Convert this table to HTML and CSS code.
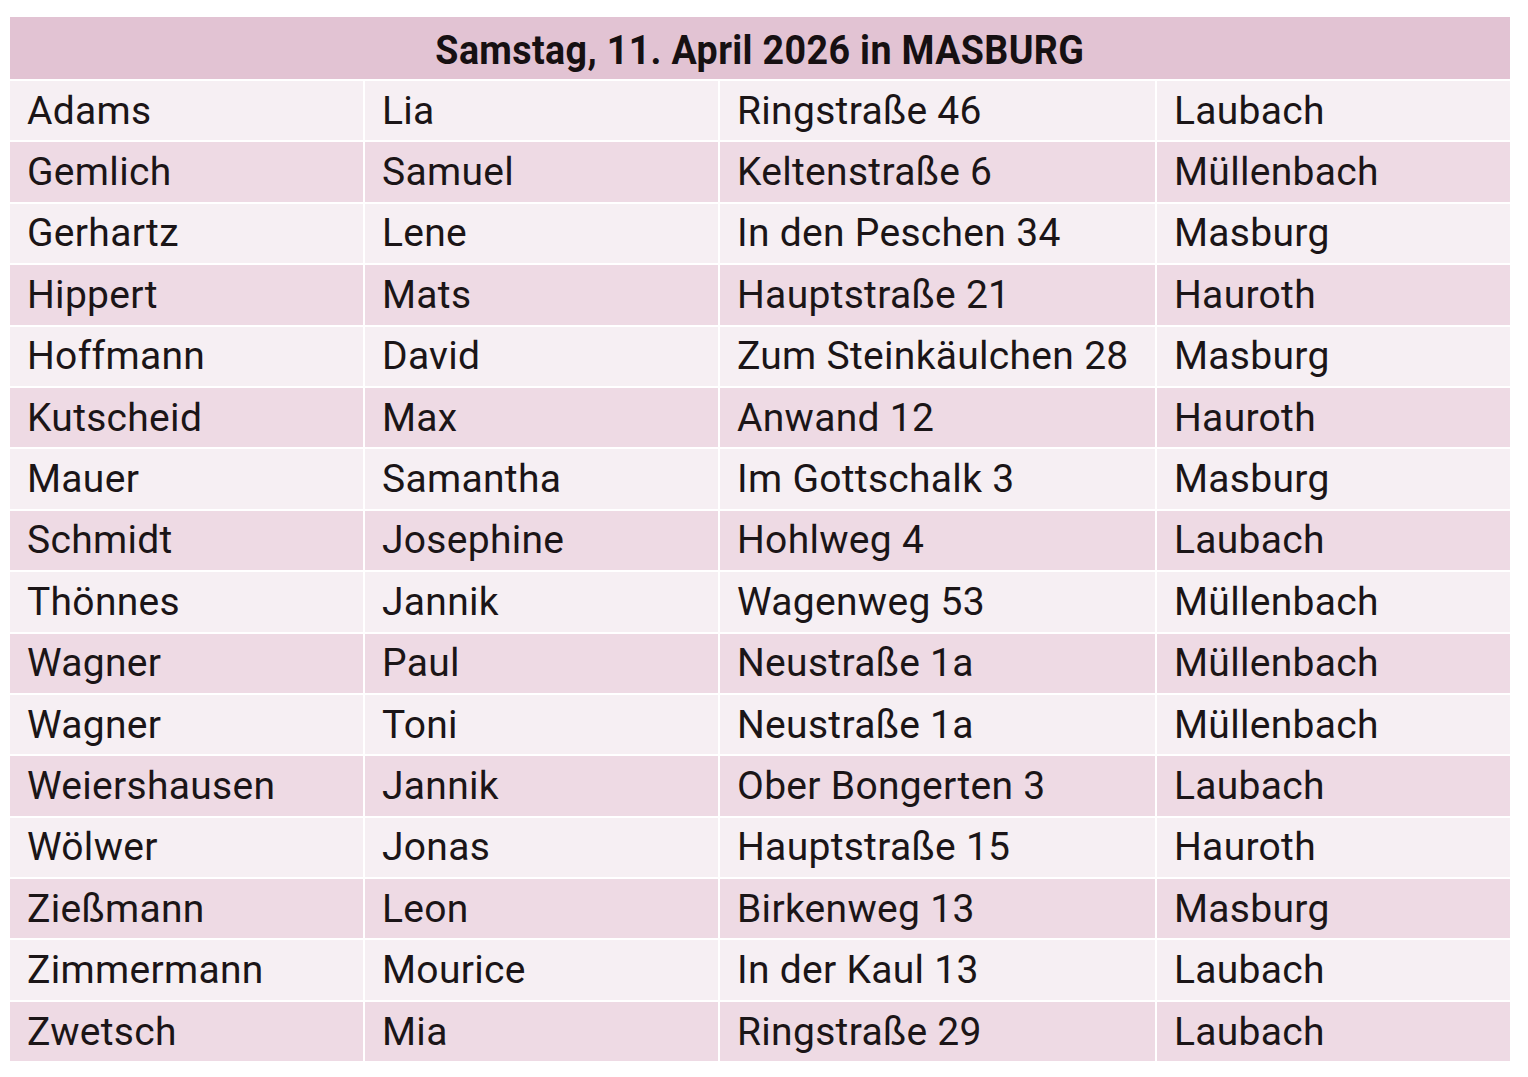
FILE: index.html
```html
<!DOCTYPE html>
<html lang="de">
<head>
<meta charset="utf-8">
<title>Samstag, 11. April 2026 in MASBURG</title>
<link rel="stylesheet" href="styles.css">
</head>
<body>
<table class="list">
  <colgroup>
    <col class="c-name"><col class="c-first"><col class="c-street"><col class="c-town">
  </colgroup>
  <thead>
    <tr><th colspan="4"><span class="title">Samstag, 11. April 2026 in MASBURG</span></th></tr>
  </thead>
  <tbody>
    <tr><td>Adams</td><td>Lia</td><td>Ringstraße 46</td><td>Laubach</td></tr>
    <tr><td>Gemlich</td><td>Samuel</td><td>Keltenstraße 6</td><td>Müllenbach</td></tr>
    <tr><td>Gerhartz</td><td>Lene</td><td>In den Peschen 34</td><td>Masburg</td></tr>
    <tr><td>Hippert</td><td>Mats</td><td>Hauptstraße 21</td><td>Hauroth</td></tr>
    <tr><td>Hoffmann</td><td>David</td><td>Zum Steinkäulchen 28</td><td>Masburg</td></tr>
    <tr><td>Kutscheid</td><td>Max</td><td>Anwand 12</td><td>Hauroth</td></tr>
    <tr><td>Mauer</td><td>Samantha</td><td>Im Gottschalk 3</td><td>Masburg</td></tr>
    <tr><td>Schmidt</td><td>Josephine</td><td>Hohlweg 4</td><td>Laubach</td></tr>
    <tr><td>Thönnes</td><td>Jannik</td><td>Wagenweg 53</td><td>Müllenbach</td></tr>
    <tr><td>Wagner</td><td>Paul</td><td>Neustraße 1a</td><td>Müllenbach</td></tr>
    <tr><td>Wagner</td><td>Toni</td><td>Neustraße 1a</td><td>Müllenbach</td></tr>
    <tr><td>Weiershausen</td><td>Jannik</td><td>Ober Bongerten 3</td><td>Laubach</td></tr>
    <tr><td>Wölwer</td><td>Jonas</td><td>Hauptstraße 15</td><td>Hauroth</td></tr>
    <tr><td>Zießmann</td><td>Leon</td><td>Birkenweg 13</td><td>Masburg</td></tr>
    <tr><td>Zimmermann</td><td>Mourice</td><td>In der Kaul 13</td><td>Laubach</td></tr>
    <tr><td>Zwetsch</td><td>Mia</td><td>Ringstraße 29</td><td>Laubach</td></tr>
  </tbody>
</table>
</body>
</html>
```
FILE: styles.css
```css
html, body {
  margin: 0;
  padding: 0;
  background: #ffffff;
}
body {
  padding: 15px 0 0 8px;
  font-family: Roboto, "Liberation Sans", sans-serif;
  color: #1b1517;
}
.list {
  border-collapse: separate;
  border-spacing: 2px;
  table-layout: fixed;
  width: 1504px;
}
.c-name, .c-first, .c-town { width: 353px; }
.c-street { width: 435px; }
.list th {
  height: 62px;
  padding: 0;
  background: #e2c3d3;
  text-align: center;
  vertical-align: middle;
  white-space: nowrap;
}
.title {
  display: inline-block;
  font-family: Roboto, "Liberation Sans", sans-serif;
  font-weight: 700;
  font-size: 41px;
  line-height: 44px;
  letter-spacing: 0.4px;
  color: #161012;
  transform: scaleX(0.917);
  transform-origin: center;
  position: relative;
  top: 2px;
}
.list td {
  height: 59.4px;
  padding: 0 0 0 17px;
  font-size: 39px;
  font-weight: 400;
  letter-spacing: 0.3px;
  white-space: nowrap;
  vertical-align: middle;
  background: #f6eff3;
}
.list tbody tr:nth-child(even) td {
  background: #eedae4;
}
```
